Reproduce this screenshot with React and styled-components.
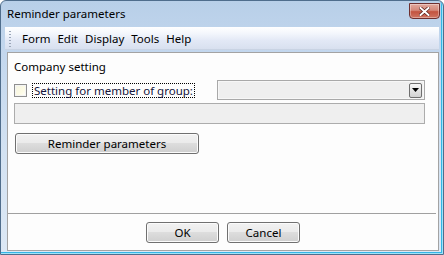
import React from 'react';
import styled, { createGlobalStyle } from 'styled-components';

const GlobalStyle = createGlobalStyle`
  html, body {
    margin: 0;
    padding: 0;
    background: #ffffff;
  }
  * {
    box-sizing: border-box;
  }
`;

const FONT = `'Noto Sans', 'Open Sans', sans-serif`;

const Window = styled.div`
  width: 444px;
  height: 255px;
  display: flex;
  flex-direction: column;
  border: 1px solid #4f6d8c;
  border-radius: 6px 6px 0 0;
  background: linear-gradient(180deg, #b8cfe8 0%, #c3d7ee 20%, #d3e2f2 60%, #dce8f5 100%);
  box-shadow: inset -1px -1px 0 #9fe3f8, inset -2px -2px 0 #33b5e6;
  font-family: ${FONT};
  font-size: 11.5px;
  color: #000;
  overflow: hidden;
`;

const TitleBar = styled.div`
  height: 26px;
  flex-shrink: 0;
  display: flex;
  align-items: center;
  justify-content: space-between;
  padding: 0 5px 0 6px;
`;

const Title = styled.span`
  font-size: 11.5px;
  color: #000;
  margin-top: -1px;
`;

const CloseButton = styled.div`
  width: 31px;
  height: 16px;
  margin-top: -6px;
  margin-right: -2px;
  display: flex;
  align-items: center;
  justify-content: center;
  border: 1px solid #6e2f2f;
  border-radius: 0 0 4px 4px;
  background: linear-gradient(180deg, #e2a99e 0%, #d4887a 45%, #c35340 55%, #cf7563 100%);
  box-shadow: inset 0 0 0 1px rgba(255, 255, 255, 0.35);
`;

const MenuBar = styled.div`
  height: 23px;
  flex-shrink: 0;
  margin: 0 4px;
  display: flex;
  align-items: center;
  padding-left: 4px;
  border-bottom: 1px solid #c9d3e3;
  background: linear-gradient(180deg, #ffffff 0%, #f3f6fc 30%, #e3e9f6 60%, #d8e0ef 100%);
`;

const Grip = styled.div`
  width: 2px;
  height: 17px;
  margin-right: 7px;
  background-image: radial-gradient(circle, #9aa6b8 0.8px, transparent 1px);
  background-size: 2px 3px;
`;

const MenuItem = styled.span`
  padding: 0 4px;
  margin-right: -1px;
  font-size: 11.5px;
  color: #000;
`;

const Client = styled.div`
  flex: 1;
  margin: 2px 4px 3px 6px;
  display: flex;
  flex-direction: column;
  border: 1px solid #a3a3a3;
  background: #fdfdfd;
  padding: 7px 0 7px 0;
`;

const SectionLabel = styled.div`
  height: 14px;
  line-height: 14px;
  padding-left: 6px;
`;

const Row = styled.div`
  display: flex;
  align-items: center;
  height: 20px;
  margin-top: 6px;
  padding-left: 6px;
`;

const CheckBox = styled.div`
  width: 13px;
  height: 13px;
  border: 1px solid #8f8f8f;
  background: linear-gradient(135deg, #f3f3e6 0%, #fdfbe4 60%, #ffffff 100%);
  box-shadow: inset 0 0 0 1px #f4f4f4;
  flex-shrink: 0;
`;

const CheckLabel = styled.span`
  margin-left: 5px;
  padding: 0 1px;
  height: 15px;
  line-height: 13px;
  border: 1px dotted #000;
  color: #14143a;
`;

const Combo = styled.div`
  margin-left: auto;
  margin-right: 13px;
  width: 208px;
  height: 20px;
  display: flex;
  align-items: center;
  justify-content: flex-end;
  padding-right: 2px;
  border: 1px solid #a9a9a9;
  background: #efefef;
  box-shadow: inset 0 0 0 1px #f7f7f7;
`;

const DropButton = styled.div`
  width: 13px;
  height: 15px;
  display: flex;
  align-items: center;
  justify-content: center;
  border: 1px solid #6f6f6f;
  border-radius: 2px;
  background: linear-gradient(180deg, #f6f6f6 0%, #e4e4e4 50%, #d2d2d2 100%);
`;

const TextField = styled.div`
  height: 21px;
  margin: 3px 13px 0 6px;
  border: 1px solid #acacac;
  background: #efefef;
`;

const PushButton = styled.button`
  width: ${(p) => p.$width}px;
  height: 21px;
  padding: 0;
  border: 1px solid #707070;
  border-radius: 3px;
  background: linear-gradient(180deg, #f2f2f2 0%, #ebebeb 45%, #dddddd 50%, #cfcfcf 100%);
  box-shadow: inset 0 0 0 1px #fbfbfb;
  font-family: ${FONT};
  font-size: 11.5px;
  color: #000;
`;

const ButtonRow = styled.div`
  padding-left: ${(p) => p.$left || 0}px;
  margin-top: ${(p) => p.$top || 0}px;
  display: flex;
  justify-content: ${(p) => p.$justify || 'flex-start'};
  gap: 8px;
`;

const Spacer = styled.div`
  flex: 1;
`;

const Separator = styled.div`
  height: 1px;
  margin-right: 2px;
  background: #a0a0a0;
`;

const App = () => (
  <>
    <GlobalStyle />
    <Window>
      <TitleBar>
        <Title>Reminder parameters</Title>
        <CloseButton>
          <svg width="11" height="9" viewBox="0 0 11 9">
            <path
              d="M1.5 1 L9.5 8 M9.5 1 L1.5 8"
              stroke="#5a1f1a"
              strokeWidth="3.4"
              strokeLinecap="square"
            />
            <path
              d="M1.5 1 L9.5 8 M9.5 1 L1.5 8"
              stroke="#ffffff"
              strokeWidth="2"
              strokeLinecap="square"
            />
          </svg>
        </CloseButton>
      </TitleBar>

      <MenuBar>
        <Grip />
        <MenuItem>Form</MenuItem>
        <MenuItem>Edit</MenuItem>
        <MenuItem>Display</MenuItem>
        <MenuItem>Tools</MenuItem>
        <MenuItem>Help</MenuItem>
      </MenuBar>

      <Client>
        <SectionLabel>Company setting</SectionLabel>
        <Row>
          <CheckBox />
          <CheckLabel>Setting for member of group:</CheckLabel>
          <Combo>
            <DropButton>
              <svg width="7" height="4" viewBox="0 0 7 4">
                <path d="M0 0 H7 L3.5 4 Z" fill="#000" />
              </svg>
            </DropButton>
          </Combo>
        </Row>
        <TextField />
        <ButtonRow $left={7} $top={9}>
          <PushButton $width={184}>Reminder parameters</PushButton>
        </ButtonRow>
        <Spacer />
        <Separator />
        <ButtonRow $top={8} $justify="center">
          <PushButton $width={73}>OK</PushButton>
          <PushButton $width={73}>Cancel</PushButton>
        </ButtonRow>
      </Client>
    </Window>
  </>
);

export default App;
